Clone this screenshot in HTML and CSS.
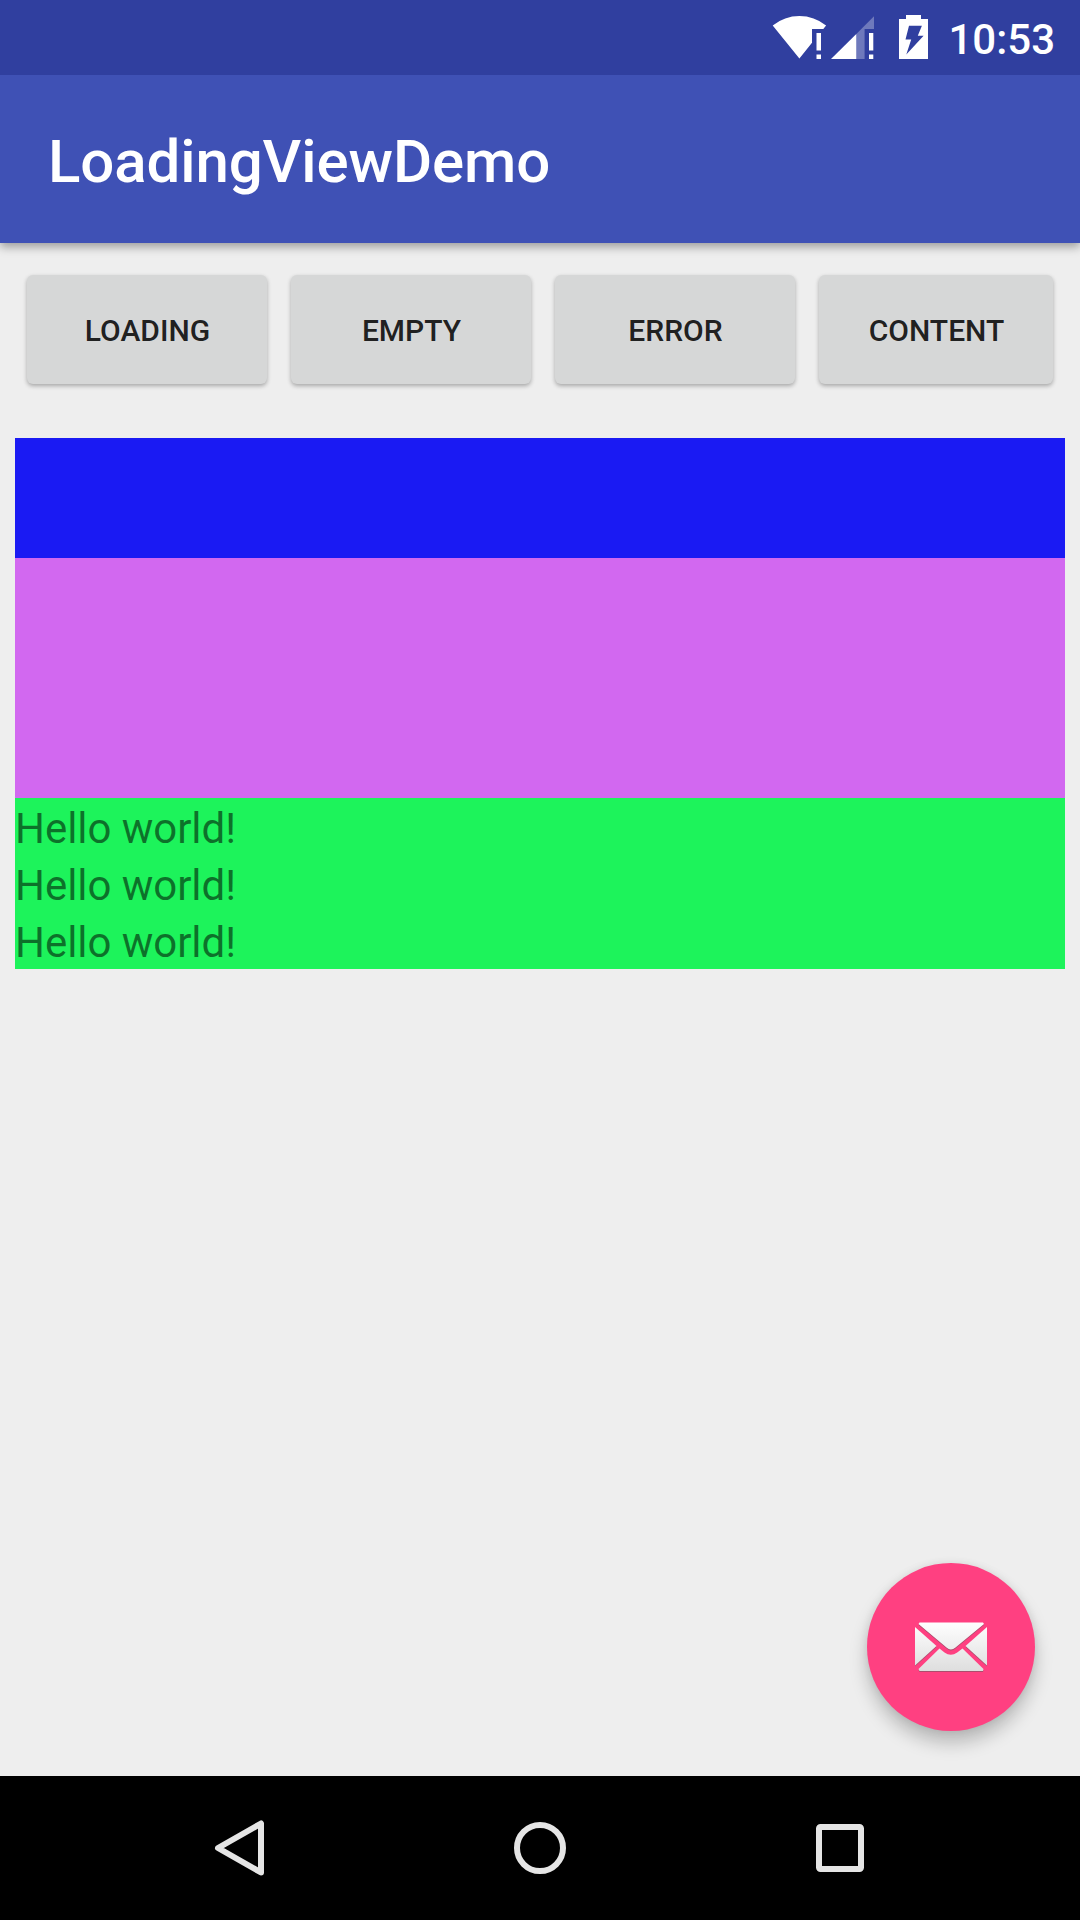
FILE: index.html
```html
<!DOCTYPE html>
<html lang="en">
<head>
<meta charset="utf-8">
<title>LoadingViewDemo</title>
<link rel="stylesheet" href="styles.css">
</head>
<body>
<header class="status-bar">
  <svg class="icon-wifi" width="59" height="75" viewBox="12 0 59 75">
    <path fill="#fff" d="M12.700 25.500Q24.500 16 39.400 16T66.100 25.500L63.300 29H52V42.700L39.400 58.600Z"/>
    <path fill="#fff" d="M56.500 33h4.500v17.500h-4.500zM56.500 54.600h4.500V59h-4.500z"/>
  </svg>
  <svg class="icon-signal" width="44" height="75" viewBox="71 0 44 75">
    <path fill="#fff" d="M71 59L96.300 34V59Z"/>
    <path fill="#fff" opacity=".3" d="M96.300 34L114 16.300V29H104.600V59H96.300Z"/>
    <path fill="#fff" d="M109 33h4.300v17.500h-4.300zM109 54.600h4.300V59h-4.300z"/>
  </svg>
  <svg class="icon-battery" width="29" height="75" viewBox="139 0 29 75">
    <path fill="#fff" fill-rule="evenodd" d="M146 15h15v4h7v40h-29V19h7zM149 25.700l-3.500 13.800h5.700L146.300 54.500 163.600 35.700h-5.800L161.900 25.700z"/>
  </svg>
  <span class="clock">10:53</span>
</header>
<div class="app-bar"><h1>LoadingViewDemo</h1></div>
<main class="screen">
  <div class="buttons">
    <button>LOADING</button>
    <button>EMPTY</button>
    <button>ERROR</button>
    <button>CONTENT</button>
  </div>
  <div class="content">
    <div class="block-blue"></div>
    <div class="block-purple"></div>
    <div class="block-green">
      <p>Hello world!</p>
      <p>Hello world!</p>
      <p>Hello world!</p>
    </div>
  </div>
  <button class="fab" aria-label="Mail">
    <svg width="74" height="52" viewBox="0 0 74 52">
      <defs><linearGradient id="paper" x1="0" y1="1" x2="0" y2="50" gradientUnits="userSpaceOnUse"><stop offset="0" stop-color="#fff"/><stop offset="1" stop-color="#dedede"/></linearGradient></defs>
      <g class="envelope" fill="url(#paper)">
        <path d="M5.500 1.500H69L70 3L41.500 26.500Q36.800 30.500 32.500 26.500L4.500 3Z"/>
        <path d="M1 6L22.500 25L1 44.500Z"/>
        <path d="M73 6L51.500 25L73 44.500Z"/>
        <path d="M25.500 27.500L30.500 31.500Q36.800 36 43.200 31.500L48.500 27.500L69.500 48L69 50H5.500L4.500 48Z"/>
      </g>
    </svg>
  </button>
</main>
<nav class="nav-bar">
  <svg width="60" height="60" viewBox="0 0 60 60"><path d="M51 5.500V54.500L8 30Z"/></svg>
  <svg width="60" height="60" viewBox="0 0 60 60"><circle cx="30" cy="30" r="23"/></svg>
  <svg width="60" height="60" viewBox="0 0 60 60"><rect x="9" y="9" width="42" height="42" rx="1.500"/></svg>
</nav>
</body>
</html>
```
FILE: styles.css
```css
* { box-sizing: border-box; }
body {
  margin: 0;
  width: 1080px;
  height: 1920px;
  display: flex;
  flex-direction: column;
  background: #eee;
  font-family: Roboto, sans-serif;
  overflow: hidden;
}
svg { display: block; }
.status-bar {
  position: relative;
  z-index: 1;
  height: 75px;
  background: #303f9f;
  color: #fff;
  display: flex;
  align-items: center;
  justify-content: flex-end;
  padding-right: 25px;
}
.icon-battery { margin: 0 20px 0 24px; }
.clock {
  font-size: 42px;
  font-weight: 500;
  line-height: 50px;
  padding-top: 5px;
}
.app-bar {
  height: 168px;
  background: #3f51b5;
  display: flex;
  align-items: center;
  padding: 5px 0 0 48px;
  box-shadow: 0 4px 9px rgba(0, 0, 0, .34);
}
.app-bar h1 {
  margin: 0;
  color: #fff;
  font-size: 60px;
  font-weight: 500;
  line-height: 72px;
  letter-spacing: -.1px;
}
.screen {
  flex: 1;
  position: relative;
  padding: 32px 15px 0;
}
.buttons {
  display: grid;
  grid-template-columns: 240px 240px 240px 234px;
  gap: 24px;
  padding-left: 12px;
}
.buttons button {
  height: 109px;
  border: 0;
  border-radius: 6px;
  padding: 2px 0 0 1px;
  background: #d6d7d7;
  color: rgba(0, 0, 0, .87);
  font: 500 30px/36px Roboto, sans-serif;
  box-shadow: 0 2px 4px rgba(0, 0, 0, .3);
}
.content { margin-top: 54px; }
.block-blue { height: 120px; background: #1a1af3; }
.block-purple { height: 240px; background: #d268f0; }
.block-green { background: #1df35b; }
.block-green p {
  margin: 0;
  height: 57px;
  padding-top: 2px;
  font-size: 42px;
  line-height: 57px;
  letter-spacing: -.05px;
  color: rgba(0, 0, 0, .54);
}
.fab {
  position: absolute;
  right: 45px;
  bottom: 45px;
  width: 168px;
  height: 168px;
  padding: 0;
  border: 0;
  border-radius: 50%;
  background: #ff4081;
  display: flex;
  align-items: center;
  justify-content: center;
  box-shadow: 0 12px 18px rgba(0, 0, 0, .22), 0 0 9px rgba(0, 0, 0, .08);
}
.envelope { filter: drop-shadow(0 1px .5px rgba(90, 90, 90, .5)); }
.nav-bar {
  height: 144px;
  background: #000;
  display: flex;
  align-items: center;
  justify-content: center;
  gap: 240px;
}
.nav-bar svg {
  fill: none;
  stroke: #e5e5e5;
  stroke-width: 6;
  stroke-linejoin: round;
}
```
